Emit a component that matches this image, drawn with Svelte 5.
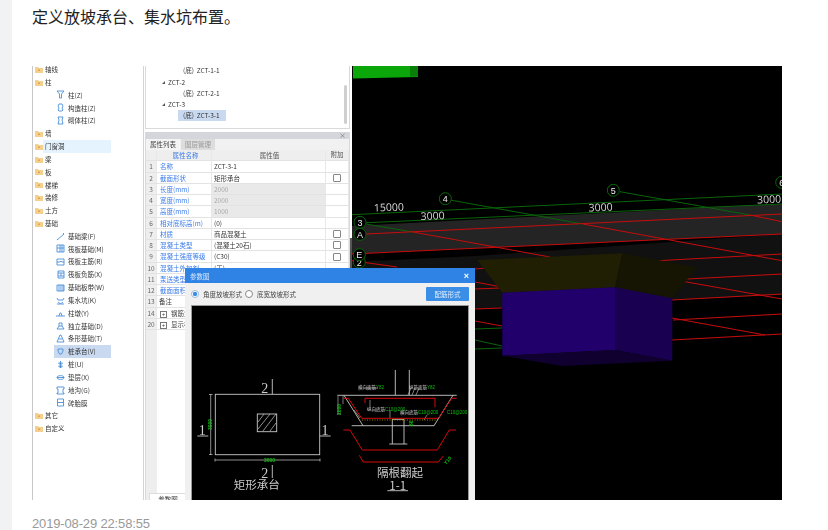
<script>
  const icons = {
    zhu: 'M1 1h7L5.500 4v4h-2V4z',
    gz: 'M3 1h3l1 2-1 2 1 2-1 1H3L2 7l1-2-1-2z',
    qt: 'M2 1h5L6 4l1 4H2l1-4z',
    jl: 'M1 8l7-6M1 7l1 1M7 1l1 1',
    fb: 'M1 1h7v7H1zM1 4h7M4 1v7M6 1v7',
    zj: 'M1 2h7v6H1zM1 5h3l1-1 1 1h2',
    fj: 'M2 1h6v7H2zM2 3h6M2 6h6M5 3v3',
    bd: 'M1 2h7v6H1zM3 2v6M5 2v6M7 2v6',
    jsk: 'M1 2l1 2h5l1-2M2 6c2 2 3 2 5 0M1 8h7',
    zd: 'M0 7h9M3 7l1-3h1l1 3',
    dl: 'M1 8h7L6 5V2H3v3zM3 5h3',
    tx: 'M1 8h7L5 1H4zM3 5h3',
    ct: 'M2 2h5v2L5.500 7h-2L2 4z',
    z: 'M4.500 1v7M2.500 3h4L4.500 5zM2.500 6h4L4.500 8z',
    dc: 'M1 4.500C1 2 8 2 8 4.500S1 7 1 4.500zM1 4.500h7',
    dg: 'M1 1h7v2H7v4h1v1H1V7h1V3H1z',
    zt: 'M1.500 1h6v7h-6zM1.500 4.500h6'
  };
  const tree = [
    ['轴线'], ['柱'], ['柱(Z)', 'zhu'], ['构造柱(Z)', 'gz'], ['砌体柱(Z)', 'qt'], ['墙'],
    ['门窗洞', null, 'hover'], ['梁'], ['板'], ['楼梯'], ['装修'], ['土方'], ['基础'],
    ['基础梁(F)', 'jl'], ['筏板基础(M)', 'fb'], ['筏板主筋(R)', 'zj'], ['筏板负筋(X)', 'fj'],
    ['基础板带(W)', 'bd'], ['集水坑(K)', 'jsk'], ['柱墩(Y)', 'zd'], ['独立基础(D)', 'dl'],
    ['条形基础(T)', 'tx'], ['桩承台(V)', 'ct', 'sel'], ['桩(U)', 'z'], ['垫层(X)', 'dc'],
    ['地沟(G)', 'dg'], ['砖胎膜', 'zt'], ['其它'], ['自定义']
  ];
  const nodes = [
    ['(底)  ZCT-1-1', 'leaf'], ['ZCT-2', 'branch'], ['(底)  ZCT-2-1', 'leaf'],
    ['ZCT-3', 'branch'], ['(底)  ZCT-3-1', 'leaf on']
  ];
  const props = [
    ['1', '名称', 'ZCT-3-1', 0, 0], ['2', '截面形状', '矩形承台', 0, 1],
    ['3', '长度(mm)', '2000', 1, 0], ['4', '宽度(mm)', '2000', 1, 0], ['5', '高度(mm)', '1000', 1, 0],
    ['6', '相对底标高(m)', '(0)', 0, 0], ['7', '材质', '商品混凝土', 0, 1],
    ['8', '混凝土类型', '(混凝土20石)', 0, 1], ['9', '混凝土强度等级', '(C30)', 0, 1],
    ['10', '混凝土外加剂', '(无)', 0, 0], ['11', '泵送类型', '(混凝土泵)', 0, 0],
    ['12', '截面面积(m²)', '4', 0, 0], ['13', '备注', '', 0, 0, 'plain'],
    ['14', '钢筋业务属性', '', 0, 0, 'group'], ['20', '显示样式', '', 0, 0, 'group']
  ];
  const reds = [
    '360,234.300 782,214', '352,254 782,234', '658,260.700 782,254', '687,279 782,274',
    '672,300 782,294', '673,320 782,314', '672,340 782,334', '413,232 550,257',
    '583,224 782,260.700', '750,215 782,221.700', '352,260.700 397,267', '475,282 502,287',
    '475,321 502,326', '685,281.700 782,299', '672,318 765,335', '475,269 485,268',
    '475,289 500,288', '475,309 502,308'
  ];
  const greens = [
    '352,214.700 782,194', '360,223 782,204', '360,223 413,232', '450,200 583,224',
    '620,191.700 750,215', '475,329 502,328', '475,340 502,346', '475,349 502,348'
  ];
  const marks = [
    ['4', 445.3, 198.7], ['5', 613.3, 190.3], ['6', 781.7, 182.3], ['2', 359.3, 262],
    ['3', 360, 222.3], ['A', 360, 234.3], ['E', 359.3, 254.7]
  ];
  const spans = [['15000', 389, 211], ['3000', 432.7, 219.5], ['3000', 600.7, 211], ['3000', 769.3, 203]];
</script>

<div class="page">
  <div class="strip"></div>
  <main class="content">
    <p class="lead">定义放坡承台、集水坑布置。</p>
    <div class="shot">
      <nav class="tree">
        {#each tree as [label, icon, state]}
          <div class="row" class:child={icon}>
            {#if !icon}
              <svg class="folder" viewBox="0 0 8 7"><path d="M0 1h3l1 1h4v5H0z" fill="#f4cf8e"/><path d="M3 3.500h2v1.500H3z" fill="#dfa64c"/></svg>
            {/if}
            <div class="cell {state ?? ''}">
              {#if icon}
                <svg class="ico" viewBox="0 0 9 9"><path d={icons[icon]} fill="none" stroke="#4a90d9" stroke-width=".9"/></svg>
              {/if}
              <span>{label}</span>
            </div>
          </div>
        {/each}
      </nav>

      <section class="mid">
        <div class="nodes">
          {#each nodes as [label, kind]}
            <div class="node {kind}"><span>{label}</span></div>
          {/each}
          <div class="thumb"></div>
        </div>
        <div class="props">
          <div class="bar"><span>×</span></div>
          <div class="tabs"><span class="tab active">属性列表</span><span class="tab">图层管理</span></div>
          <div class="tr head"><span class="n"></span><span class="k">属性名称</span><span class="v">属性值</span><span class="a">附加</span></div>
          {#each props as [n, k, v, off, chk, kind]}
            <div class="tr">
              <span class="n">{n}</span>
              <span class="k {kind ?? ''}">{#if kind === 'group'}<i class="plus">+</i>{/if}{k}</span>
              <span class="v" class:off>{v}</span>
              <span class="a">{#if chk}<i class="box"></i>{/if}</span>
            </div>
          {/each}
          <div class="fill"><span class="n"></span><span class="btab">参数图</span></div>
        </div>
      </section>

      <div class="cad">
        <svg viewBox="352 66 430 434" width="430" height="434">
          <polygon points="352,262 475,256 782,234 782,295 475,309 352,316" fill="#111"/>
          <polygon points="352,226 782,204 782,234 352,254" fill="#242424"/>
          <path d="M353 66h65v11l-65 1.500z" fill="#0aa60a"/>
          <path d="M410 66h8v10.500h-8z" fill="#087f08"/>
          {#each greens as p}<polyline points={p} fill="none" stroke="#0a640a" stroke-width="1"/>{/each}
          {#each reds as p}<polyline points={p} fill="none" stroke="#c80c0c" stroke-width="1"/>{/each}
          <polygon points="477.3,260 622.3,253.3 615,287.3 502.3,292.7" fill="#201f03"/>
          <polygon points="622.3,253.3 697.3,267.3 672.3,298.3 615,287.3" fill="#161503"/>
          <polygon points="502.3,292.7 615,287.3 615,350 502.3,355.7" fill="#22006b"/>
          <polygon points="615,287.3 672.3,298.3 672.3,360.7 615,350" fill="#190050"/>
          <polygon points="502.3,355.7 615,350 672.3,360.7 561.7,366" fill="#10002f"/>
          {#each marks as [t, x, y]}
            <circle cx={x} cy={y} r="6" fill="#000" stroke="#0a640a"/>
            <text class="mark" x={x} y={y + 3.500} text-anchor="middle">{t}</text>
          {/each}
          {#each spans as [t, x, y]}
            <text class="span" x={x} y={y} text-anchor="middle" transform="rotate(-2 {x} {y})">{t}</text>
          {/each}
        </svg>
      </div>

      <div class="gutter"></div>

      <div class="dialog">
        <header><span>参数图</span><b>×</b></header>
        <div class="opts">
          <i class="radio checked"></i><span>角度放坡形式</span>
          <i class="radio"></i><span>底宽放坡形式</span>
          <button>配筋形式</button>
        </div>
        <div class="pane">
          <svg viewBox="192 306 276 194" width="276" height="194">
            <g fill="none" stroke="#c8c8c8" stroke-width=".9">
              <rect x="215.3" y="394.3" width="104.4" height="60.4"/>
              <rect x="257.300" y="414" width="19.400" height="17.700"/>
              <path d="M258 422l6-8M258 429l12-15M263 431l13-17M270 431l6-8" stroke-width=".7"/>
              <path d="M272.300 379v15M272.300 465v13M197.300 436h11M319.700 436h11"/>
              <path d="M210.700 394v61M209 394.500h3.500M209 454.500h3.500M215 460h105M215 458.500v3M320 458.500v3" stroke-width=".7"/>
              <path d="M337.300 395.300h119.400M351.700 425.700h82.600M344 395.300l19 30.400M453 395.300l-19 30.400"/>
              <path d="M395.300 370v25M409.300 370v25M392.300 444v-24.700h11.700V444M389.300 444h18"/>
              <path d="M387.300 490.700h20.700"/>
              <path d="M338 396v18M337 414h4M343 396v8M366 388h12M411 388l-3 7M415 388l-3 7M419 388l-3 7M370 400v8M354 410l6 8M390 410v8M427 415l-3 5" stroke-width=".6"/>
            </g>
            <g fill="none" stroke="#d50a0a" stroke-width="1">
              <path d="M343.300 398.300h5l13.400 20h76.600l13.400-20h5"/>
              <path d="M365 403.300v-5h70v9"/>
              <path d="M343.300 430h6.700l12.300 20h75l12-20h6.700"/>
              <path d="M359.300 455.300l4 6.700h75l5-6"/>
            </g>
            <path d="M362 420h76" stroke="#c9b400" stroke-width=".7" stroke-dasharray="1 1.500"/>
            <g class="cn-s">
              <text x="358" y="389">横向面筋</text>
              <text x="409" y="389">纵筋面筋</text>
              <text x="367" y="411">纵向底筋</text>
              <text x="400" y="414">横向底筋</text>
            </g>
            <g class="cn-g">
              <text x="376" y="389">Y82</text>
              <text x="427" y="389">Y82</text>
              <text x="385" y="411">C10@200</text>
              <text x="418" y="414">C10@200</text>
              <text x="447" y="414">C10@200</text>
              <text class="dim" x="264" y="462">3000</text>
              <text class="dim" transform="translate(212 430) rotate(-90)">3000</text>
              <text class="dim" transform="translate(341 415) rotate(-90)">1000</text>
              <text class="dim" transform="translate(413 426) rotate(-90)">50</text>
              <text class="dim" transform="translate(446 465) rotate(-50)">Y10</text>
            </g>
            <g class="num">
              <text x="264.700" y="392.500" text-anchor="middle">2</text>
              <text x="264.700" y="477.500" text-anchor="middle">2</text>
              <text x="202.300" y="435" text-anchor="middle">1</text>
              <text x="325" y="435" text-anchor="middle">1</text>
            </g>
            <g class="cap">
              <text x="256.700" y="488.500" text-anchor="middle">矩形承台</text>
              <text x="400" y="476.500" text-anchor="middle">隔根翻起</text>
              <text x="397.700" y="489.500" text-anchor="middle">1-1</text>
            </g>
          </svg>
        </div>
      </div>
    </div>
    <time>2019-08-29 22:58:55</time>
  </main>
</div>

<style>
  :global(body) { background: #fff; overflow: hidden; }
  .page { display: flex; height: 530px; overflow: hidden; font-family: "Noto Sans CJK SC", "Liberation Sans", sans-serif; }
  .strip { width: 12px; background: #f1f2f3; flex: none; }
  .content { padding-left: 20px; width: 750px; }
  .lead { margin: 0; padding-top: 4px; height: 66px; box-sizing: border-box; font-size: 16px; line-height: 24px; color: #222; }
  .shot { position: relative; display: grid; grid-template-columns: 112px 208px 430px; height: 434px; overflow: hidden; font-size: 6.5px; color: #333; filter: blur(.3px); background: #fff; }
  time { display: block; margin-top: 14px; font: 13px/20px "Liberation Sans", sans-serif; letter-spacing: -.15px; color: #999; }

  .tree { border-left: 1px solid #c8c8c8; border-right: 1px solid #d4d4d4; overflow: hidden; }
  .row { height: 12.83px; display: flex; align-items: center; padding-left: 2px; }
  .row:first-child { margin-top: -3.1px; }
  .row.child { padding-left: 21px; }
  .folder { width: 8px; height: 7px; flex: none; }
  .cell { flex: 1; margin-right: 32px; height: 100%; display: flex; align-items: center; padding-left: 2px; gap: 3px; line-height: 1; }
  .ico { width: 9px; height: 9px; flex: none; }
  .cell.hover { background: #e5f3ff; }
  .cell.sel { background: #c9d9f0; }

  .mid { padding-left: 1px; width: 205px; display: flex; flex-direction: column; }
  .nodes { position: relative; height: 63px; box-sizing: border-box; border: 1px solid #d9d9d9; border-top: 0; }
  .node { height: 11.2px; line-height: 11.2px; display: flex; white-space: pre; }
  .node:first-child { margin-top: -.6px; }
  .node.leaf { padding-left: 37px; }
  .node.on span { background: #c9d9f0; padding: 0 6px 0 5px; margin-left: -5px; }
  .node.branch { padding-left: 23px; }
  .node.branch::before { content: ""; width: 0; height: 0; margin: 4px 3px 0 -7px; border-left: 3px solid transparent; border-bottom: 3px solid #555; }
  .thumb { position: absolute; right: 2px; top: 19px; width: 3px; height: 39px; background: #cfcfcf; border-radius: 2px; }

  .props { margin-top: 3px; flex: 1; display: flex; flex-direction: column; border-left: 1px solid #d9d9d9; border-right: 1px solid #d9d9d9; min-height: 0; }
  .bar { height: 7px; background: #d4d6db; position: relative; flex: none; }
  .bar span { position: absolute; right: 3px; top: -1px; font-size: 7px; line-height: 9px; color: #777; }
  .tabs { height: 11px; display: flex; gap: 1px; background: #f1f1f1; flex: none; }
  .tab { width: 34px; text-align: center; line-height: 11px; background: #ddd; color: #999; }
  .tab.active { background: #f4f4f4; color: #444; }
  .tr { display: grid; grid-template-columns: 11px 55px 114px 23px; height: 11.27px; line-height: 11.3px; flex: none; background: #fff; }
  .tr span { box-sizing: border-box; border-bottom: 1px solid #e3e3e3; border-right: 1px solid #e8e8e8; padding-left: 2px; overflow: hidden; white-space: nowrap; }
  .tr .n { background: #eee; padding: 0; text-align: center; color: #666; }
  .tr .k { color: #3a7bea; padding-left: 3px; }
  .tr .k.plain, .tr .k.group { color: #444; padding-left: 2px; }
  .tr .off { background: #e9e9e9; color: #aaa; }
  .tr .a { text-align: center; padding: 0; display: flex; align-items: center; justify-content: center; }
  .head span { background: #eee; color: #555; text-align: center; }
  .box { display: block; width: 6px; height: 6px; border: 1px solid #888; border-radius: 1px; background: #fff; }
  .plus { display: inline-block; width: 5px; height: 5px; border: 1px solid #777; margin: 0 4px 0 1px; font: 6px/5px "Liberation Sans", sans-serif; text-align: center; vertical-align: 0; }
  .fill { flex: 1; position: relative; min-height: 0; display: flex; }
  .fill .n { width: 11px; background: #eee; }
  .btab { position: absolute; left: 3px; bottom: -5px; width: 36px; height: 10px; border: 1px solid #ddd; text-align: center; line-height: 10px; background: #fff; }

  .cad { background: #000; height: 434px; overflow: hidden; }
  .cad svg { display: block; }
  .mark { font: 9px "Liberation Sans", sans-serif; fill: #eee; }
  .span { font: 10.5px "Open Sans", "Liberation Sans", sans-serif; fill: #d8d8d8; }

  .gutter { position: absolute; left: 318px; top: 172px; width: 2px; height: 30px; background: #555; }

  .dialog { position: absolute; left: 153px; top: 202px; width: 290px; height: 232px; background: #f0f0f0; display: flex; flex-direction: column; }
  .dialog header { height: 15px; background: #2f83e4; color: #dce9fb; padding: 0 6px 0 5px; display: flex; justify-content: space-between; align-items: center; flex: none; }
  .dialog header b { font: 700 9px "Liberation Sans", sans-serif; color: #fff; }
  .opts { height: 22px; display: flex; align-items: center; padding: 0 6px; flex: none; color: #444; }
  .radio { width: 6px; height: 6px; border: 1px solid #888; border-radius: 50%; background: #fff; flex: none; margin-right: 4px; }
  .radio.checked { background: radial-gradient(circle, #3a8ee6 0 2px, #fff 2.300px); border-color: #9ab9dd; }
  .opts span { width: 42px; white-space: nowrap; }
  .opts button { margin-left: auto; width: 43px; height: 14px; padding: 0; border: 0; border-radius: 1px; background: #3a8ee6; color: #e6f0fc; font: inherit; }
  .pane { margin: 0 6px; flex: 1; border: 1px solid #999; border-bottom: 0; background: #000; overflow: hidden; }
  .pane svg { display: block; }
  .cn-s { font-size: 4.500px; fill: #ccc; }
  .cn-g { font: 4.500px "Liberation Sans", sans-serif; fill: #0bbf0b; }
  .cn-g .dim { font-weight: 700; font-size: 5px; }
  .num { font: 14px "Liberation Serif", serif; fill: #ccc; }
  .cap { font: 11.500px "Noto Sans CJK SC", serif; fill: #ccc; }
</style>
